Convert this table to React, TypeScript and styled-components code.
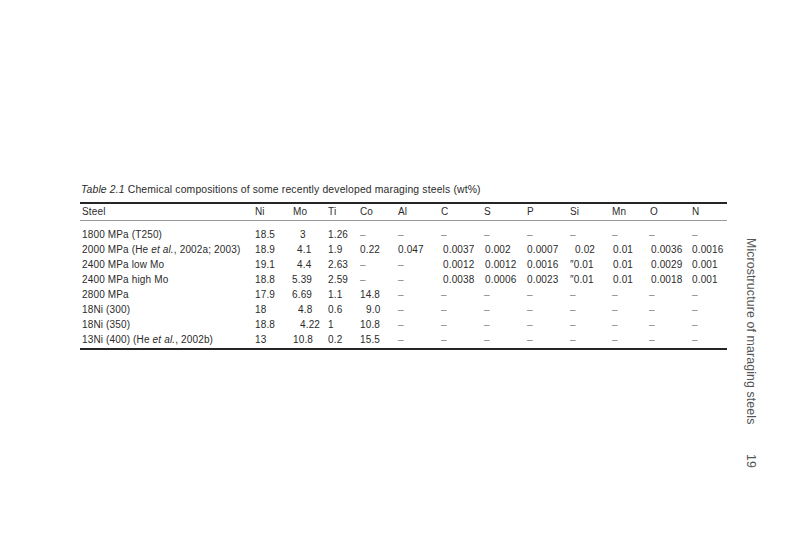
import React from "react";
import styled, { createGlobalStyle } from "styled-components";

const GlobalStyle = createGlobalStyle`
  html, body {
    margin: 0;
    padding: 0;
    background: #ffffff;
  }
  body {
    font-family: "Liberation Sans", Arial, sans-serif;
    color: #2b2b2b;
  }
`;

const Page = styled.div`
  width: 800px;
  height: 533px;
  display: flex;
  overflow: hidden;
`;

const Content = styled.section`
  width: 647px;
  margin-left: 80px;
  padding-top: 184px;
`;

const Caption = styled.p`
  margin: 0 0 6px 1px;
  font-size: 10.4px;
  line-height: 12px;
  letter-spacing: 0.15px;
  color: #2b2b2b;

  em {
    font-style: italic;
  }
`;

const Table = styled.table`
  width: 647px;
  table-layout: fixed;
  border-collapse: collapse;
  border-top: 2px solid #262626;
  border-bottom: 2px solid #262626;
  font-size: 10px;
  letter-spacing: 0.15px;
`;

const HeadCell = styled.th<{ $indent?: number }>`
  height: 16px;
  padding: 0 0 0 ${(p) => p.$indent ?? 0}px;
  text-align: left;
  font-weight: normal;
  line-height: 16px;
  white-space: nowrap;
  color: #2b2b2b;
  border-bottom: 1px solid #9a9a9a;
`;

const Spacer = styled.td`
  height: 6px;
  padding: 0;
`;

const Cell = styled.td<{ $indent?: number; $dash?: boolean }>`
  height: 15px;
  padding: 0 0 0 ${(p) => p.$indent ?? 0}px;
  line-height: 15px;
  white-space: nowrap;
  color: ${(p) => (p.$dash ? "#808080" : "#2b2b2b")};

  em {
    font-style: italic;
  }
`;

const EndSpacer = styled.td`
  height: 1px;
  padding: 0;
`;

const Side = styled.aside`
  margin-left: 18px;
  padding-top: 238px;
  display: flex;
  flex-direction: column;
  align-items: center;
  gap: 30px;
  color: #555555;
`;

const RunningHead = styled.div`
  writing-mode: vertical-rl;
  font-size: 12.4px;
  line-height: 12px;
  letter-spacing: 0.1px;
`;

const Folio = styled.div`
  writing-mode: vertical-rl;
  font-size: 12.4px;
  line-height: 12px;
`;

const columns: { label: string; width: number; indent?: number }[] = [
  { label: "Steel", width: 175, indent: 2 },
  { label: "Ni", width: 37 },
  { label: "Mo", width: 36, indent: 1 },
  { label: "Ti", width: 32 },
  { label: "Co", width: 38 },
  { label: "Al", width: 43 },
  { label: "C", width: 43 },
  { label: "S", width: 43 },
  { label: "P", width: 43 },
  { label: "Si", width: 42 },
  { label: "Mn", width: 37 },
  { label: "O", width: 43, indent: 1 },
  { label: "N", width: 35 },
];

type Value = string | [string, number];

const D = "–";

const rows: { name: React.ReactNode; values: Value[] }[] = [
  {
    name: "1800 MPa (T250)",
    values: [["18.5", 0], ["3", 8], ["1.26", 0], D, D, D, D, D, D, D, D, D],
  },
  {
    name: (
      <>
        2000 MPa (He <em>et al.</em>, 2002a; 2003)
      </>
    ),
    values: [
      "18.9",
      ["4.1", 5],
      "1.9",
      "0.22",
      "0.047",
      ["0.0037", 2],
      ["0.002", 1],
      "0.0007",
      ["0.02", 5],
      ["0.01", 1],
      ["0.0036", 2],
      "0.0016",
    ],
  },
  {
    name: "2400 MPa low Mo",
    values: [
      "19.1",
      ["4.4", 5],
      "2.63",
      D,
      D,
      ["0.0012", 2],
      ["0.0012", 1],
      "0.0016",
      "″0.01",
      ["0.01", 1],
      ["0.0029", 2],
      "0.001",
    ],
  },
  {
    name: "2400 MPa high Mo",
    values: [
      "18.8",
      "5.39",
      "2.59",
      D,
      D,
      ["0.0038", 2],
      ["0.0006", 1],
      "0.0023",
      "″0.01",
      ["0.01", 1],
      ["0.0018", 2],
      "0.001",
    ],
  },
  {
    name: "2800 MPa",
    values: ["17.9", "6.69", "1.1", "14.8", D, D, D, D, D, D, D, D],
  },
  {
    name: "18Ni (300)",
    values: ["18", ["4.8", 6], "0.6", ["9.0", 6], D, D, D, D, D, D, D, D],
  },
  {
    name: "18Ni (350)",
    values: ["18.8", ["4.22", 8], "1", "10.8", D, D, D, D, D, D, D, D],
  },
  {
    name: (
      <>
        13Ni (400) (He <em>et al.</em>, 2002b)
      </>
    ),
    values: ["13", ["10.8", 1], "0.2", "15.5", D, D, D, D, D, D, D, D],
  },
];

export default function App() {
  return (
    <>
      <GlobalStyle />
      <Page>
        <Content>
          <Caption>
            <em>Table 2.1</em> Chemical compositions of some recently developed
            maraging steels (wt%)
          </Caption>
          <Table>
            <colgroup>
              {columns.map((c) => (
                <col key={c.label} style={{ width: c.width }} />
              ))}
            </colgroup>
            <thead>
              <tr>
                {columns.map((c) => (
                  <HeadCell key={c.label} $indent={c.indent}>
                    {c.label}
                  </HeadCell>
                ))}
              </tr>
            </thead>
            <tbody>
              <tr>
                <Spacer colSpan={columns.length} />
              </tr>
              {rows.map((row, i) => (
                <tr key={i}>
                  <Cell $indent={2}>{row.name}</Cell>
                  {row.values.map((v, j) => {
                    const [text, indent] = typeof v === "string" ? [v, 0] : v;
                    return (
                      <Cell key={j} $indent={indent} $dash={text === D}>
                        {text}
                      </Cell>
                    );
                  })}
                </tr>
              ))}
              <tr>
                <EndSpacer colSpan={columns.length} />
              </tr>
            </tbody>
          </Table>
        </Content>
        <Side>
          <RunningHead>Microstructure of maraging steels</RunningHead>
          <Folio>19</Folio>
        </Side>
      </Page>
    </>
  );
}
